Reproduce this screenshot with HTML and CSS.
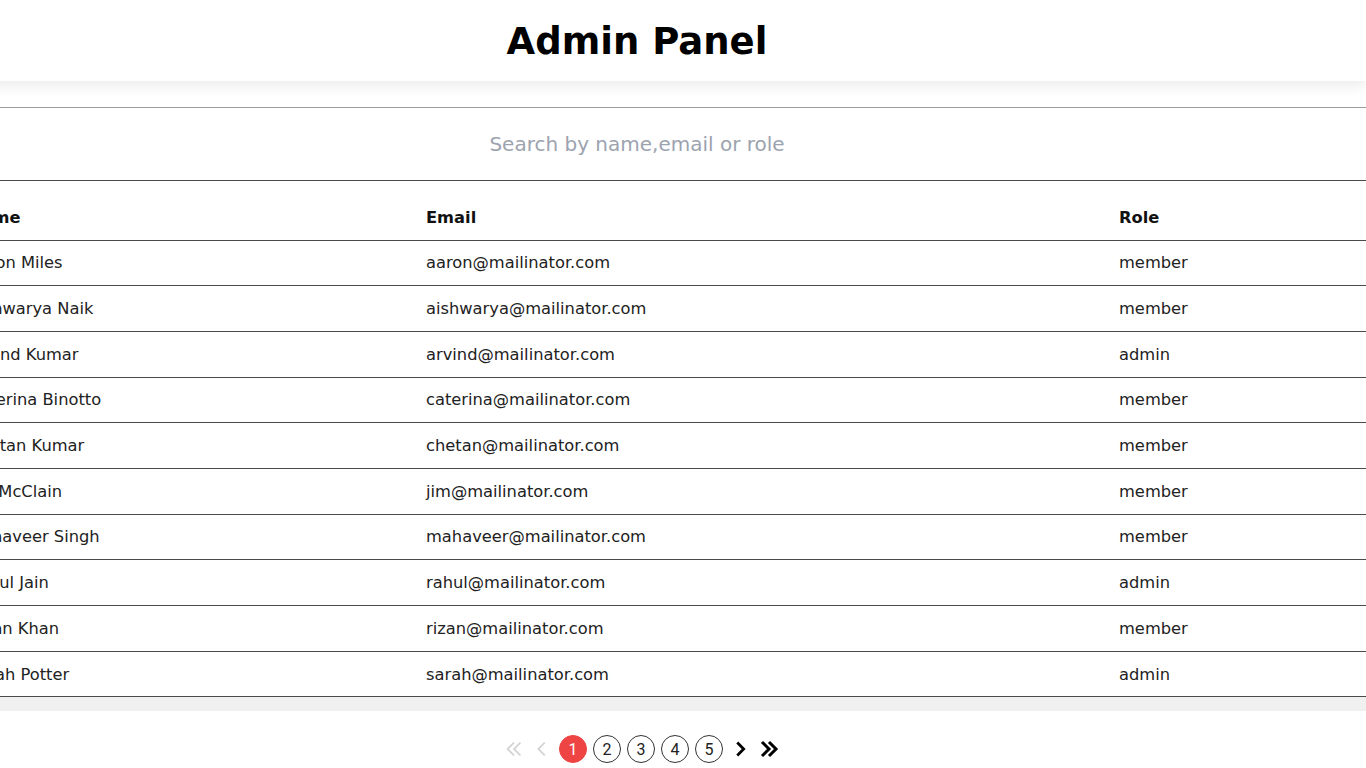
FILE: index.html
```html
<!DOCTYPE html>
<html lang="en">
<head>
<meta charset="utf-8">
<title>Admin Panel</title>
<link rel="stylesheet" href="styles.css">
</head>
<body>
<div class="page">
  <header class="topbar">
    <h1 class="title">Admin Panel</h1>
  </header>
  <main class="content">
    <input class="search" type="text" placeholder="Search by name,email or role">
    <div class="table-wrap">
      <table class="users">
        <colgroup>
          <col class="c-name"><col class="c-email"><col class="c-role">
        </colgroup>
        <thead>
          <tr><th>Name</th><th>Email</th><th>Role</th></tr>
        </thead>
        <tbody>
          <tr><td>Aaron Miles</td><td>aaron@mailinator.com</td><td>member</td></tr>
          <tr><td>Aishwarya Naik</td><td>aishwarya@mailinator.com</td><td>member</td></tr>
          <tr><td>Arvind Kumar</td><td>arvind@mailinator.com</td><td>admin</td></tr>
          <tr><td>Caterina Binotto</td><td>caterina@mailinator.com</td><td>member</td></tr>
          <tr><td>Chetan Kumar</td><td>chetan@mailinator.com</td><td>member</td></tr>
          <tr><td>Jim McClain</td><td>jim@mailinator.com</td><td>member</td></tr>
          <tr><td>Mahaveer Singh</td><td>mahaveer@mailinator.com</td><td>member</td></tr>
          <tr><td>Rahul Jain</td><td>rahul@mailinator.com</td><td>admin</td></tr>
          <tr><td>Rizan Khan</td><td>rizan@mailinator.com</td><td>member</td></tr>
          <tr><td>Sarah Potter</td><td>sarah@mailinator.com</td><td>admin</td></tr>
        </tbody>
      </table>
      <div class="scroll-track"></div>
    </div>
    <nav class="pager">
      <span class="arrow muted"><svg viewBox="0 0 24 24" width="22" height="22"><path d="M12 5l-7 7 7 7M19 5l-7 7 7 7" fill="none" stroke="currentColor" stroke-width="2"/></svg></span>
      <span class="arrow muted single"><svg viewBox="0 0 24 24" width="22" height="22"><path d="M15 5l-7 7 7 7" fill="none" stroke="currentColor" stroke-width="2"/></svg></span>
      <span class="page-num active">1</span>
      <span class="page-num">2</span>
      <span class="page-num">3</span>
      <span class="page-num">4</span>
      <span class="page-num">5</span>
      <span class="arrow single"><svg viewBox="0 0 24 24" width="22" height="22"><path d="M9 5l7 7-7 7" fill="none" stroke="currentColor" stroke-width="3"/></svg></span>
      <span class="arrow"><svg viewBox="0 0 24 24" width="24" height="24"><path d="M5 5l7 7-7 7M12 5l7 7-7 7" fill="none" stroke="currentColor" stroke-width="3"/></svg></span>
    </nav>
  </main>
</div>
</body>
</html>
```
FILE: styles.css
```css
html, body {
  margin: 0;
  padding: 0;
  background: #fff;
  overflow: hidden;
}
body {
  font-family: "DejaVu Sans", "Open Sans", sans-serif;
  color: #111;
}
.page {
  width: 1458px;
  margin-left: -92px;
}
.topbar {
  height: 81px;
  display: flex;
  align-items: center;
  justify-content: center;
  background: #fff;
  box-shadow: 0 4px 14px rgba(0, 0, 0, 0.09);
  position: relative;
  z-index: 1;
}
.title {
  margin: 0;
  padding-top: 2px;
  font-size: 37px;
  font-weight: 700;
  color: #000;
}
.content {
  padding-top: 26px;
}
.search {
  display: block;
  box-sizing: border-box;
  width: 100%;
  height: 74px;
  border: 0;
  border-top: 1px solid #9d9d9d;
  border-bottom: 1px solid #4a4a4a;
  outline: none;
  text-align: center;
  font-family: inherit;
  font-size: 20px;
  padding: 0;
  background: #fff;
}
.search::placeholder {
  color: #9ca3af;
}
.table-wrap {
  width: 100%;
}
.users {
  width: 100%;
  border-collapse: collapse;
  table-layout: fixed;
  font-size: 16.3px;
}
.c-name { width: 502px; }
.c-email { width: 693px; }
.c-role { width: auto; }
.users th {
  height: 59px;
  box-sizing: border-box;
  text-align: left;
  font-weight: 700;
  padding: 14px 16px 0;
  border-bottom: 1px solid #4a4a4a;
}
.users th:first-child, .users td:first-child {
  padding-left: 60px;
}
.users td {
  height: 44.7px;
  padding: 0 16px;
  border-bottom: 1px solid #4a4a4a;
  color: #222;
}
.scroll-track {
  height: 14px;
  background: #f0f0f0;
}
.pager {
  display: flex;
  align-items: center;
  justify-content: center;
  gap: 6px;
  padding-top: 24px;
  padding-left: 10px;
}
.arrow {
  display: flex;
  align-items: center;
  color: #000;
}
.arrow.muted {
  color: #d4d4d4;
}
.arrow svg { display: block; }
.page-num {
  box-sizing: border-box;
  width: 28px;
  height: 28px;
  border: 1px solid #333;
  border-radius: 50%;
  display: flex;
  align-items: center;
  justify-content: center;
  font-family: Roboto, "Liberation Sans", sans-serif;
  font-size: 16px;
  color: #222;
}
.page-num.active {
  background: #ef4444;
  border-color: #ef4444;
  color: #fff;
}
```
